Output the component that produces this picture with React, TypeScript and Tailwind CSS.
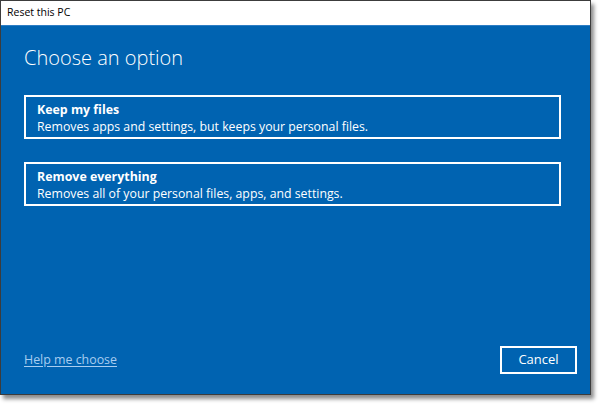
export default function App() {
  const font = { fontFamily: '"Segoe UI", "Open Sans", "Noto Sans", sans-serif' };
  return (
    <div className="w-[600px] h-[404px] bg-white relative" style={font}>
      <div className="w-[591px] h-[395px] flex flex-col border border-[#3c3c3c] shadow-[3px_4px_4px_rgba(0,0,0,0.45)]">
        <div className="h-[24px] bg-white flex items-center pl-[6px] text-[10.5px] text-black shrink-0">
          Reset this PC
        </div>
        <div className="flex-1 bg-[#0063b1] border-t border-[#2d7dc4] flex flex-col px-[23px]">
          <div className="text-white text-[20px] font-light mt-[18px] leading-[28px]">Choose an option</div>
          <div className="mt-[23px] flex flex-col gap-[23px] w-[537px]">
            <div className="border-2 border-white h-[44px] px-[11px] pt-[2px] flex flex-col justify-center text-white">
              <div className="text-[12.4px] font-bold leading-[17px]">Keep my files</div>
              <div className="text-[12.3px] leading-[17px]">Removes apps and settings, but keeps your personal files.</div>
            </div>
            <div className="border-2 border-white h-[44px] px-[11px] pt-[2px] flex flex-col justify-center text-white">
              <div className="text-[12.4px] font-bold leading-[17px]">Remove everything</div>
              <div className="text-[12.3px] leading-[17px]">Removes all of your personal files, apps, and settings.</div>
            </div>
          </div>
          <div className="flex-1" />
          <div className="flex items-center justify-between mb-[20px]">
            <span className="text-[12.4px] text-[#a8cdf0] underline underline-offset-2">Help me choose</span>
            <div className="w-[77px] h-[28px] border-2 border-white flex items-center justify-center text-white text-[13px] mr-[-10px]">
              Cancel
            </div>
          </div>
        </div>
      </div>
    </div>
  );
}
